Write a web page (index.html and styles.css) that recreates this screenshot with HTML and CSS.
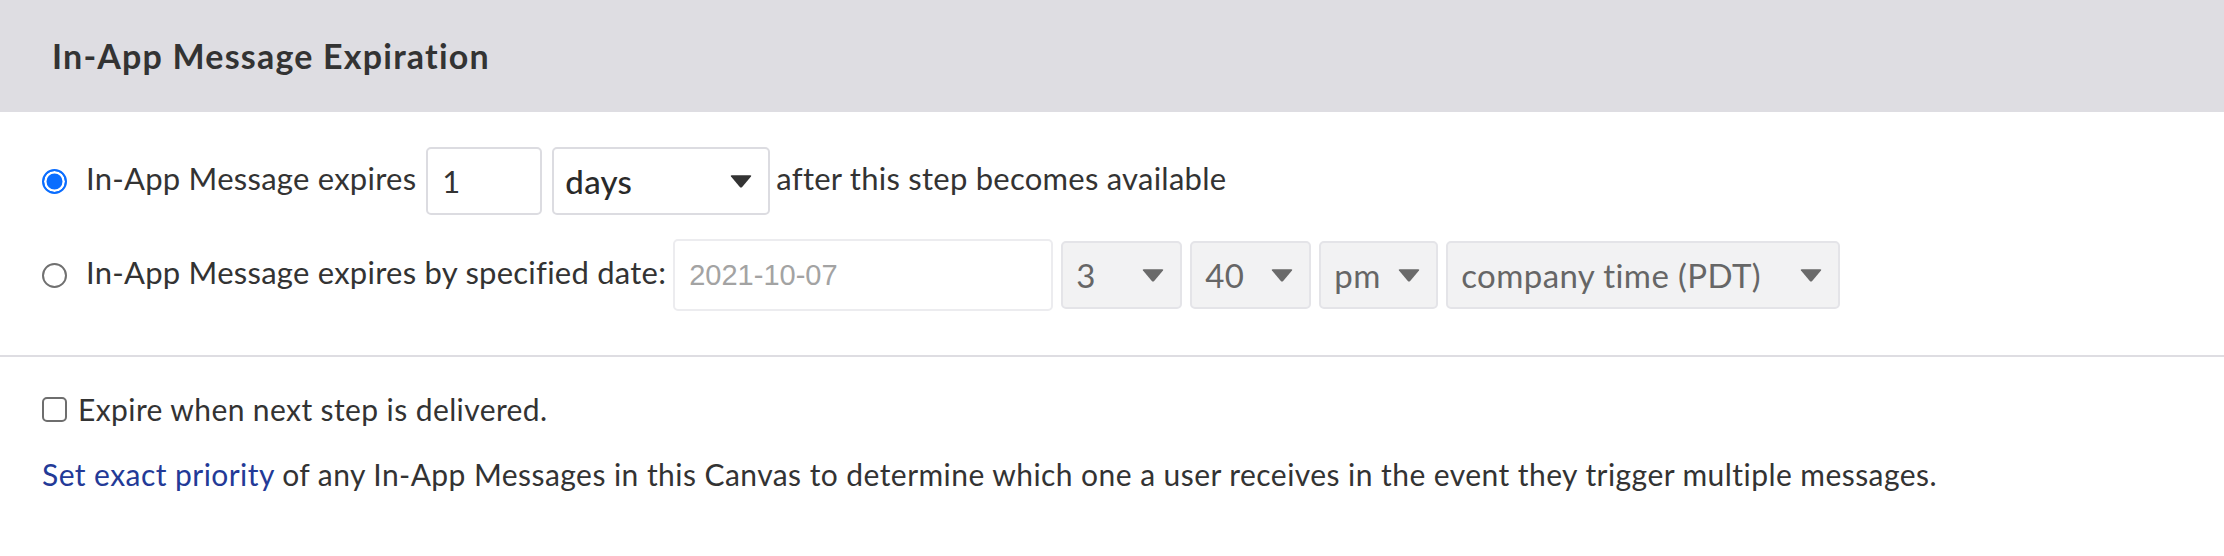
FILE: index.html
```html
<!DOCTYPE html>
<html lang="en">
<head>
<meta charset="utf-8">
<title>In-App Message Expiration</title>
<link rel="stylesheet" href="styles.css">
</head>
<body>
<div class="panel">
  <header class="panel-header">
    <h2 class="panel-title">In-App Message Expiration</h2>
  </header>

  <section class="options">
    <div class="option-row">
      <input class="radio" type="radio" name="expiry" checked>
      <span class="label">In-App Message expires</span>
      <input class="text-input num-input" type="text" value="1">
      <div class="select select-days">
        <span class="select-value">days</span>
        <svg class="caret" viewBox="0 0 22 13" aria-hidden="true"><path d="M1 1.5 Q0.2 0.3 1.6 0.3 H20.4 Q21.8 0.3 21 1.5 L12.2 12 Q11 13.2 9.8 12 Z"/></svg>
      </div>
      <span class="label label-after">after this step becomes available</span>
    </div>

    <div class="option-row">
      <input class="radio" type="radio" name="expiry">
      <span class="label">In-App Message expires by specified date:</span>
      <input class="text-input date-input" type="text" placeholder="2021-10-07" disabled>
      <div class="select select-disabled select-hour">
        <span class="select-value">3</span>
        <svg class="caret" viewBox="0 0 22 13" aria-hidden="true"><path d="M1 1.5 Q0.2 0.3 1.6 0.3 H20.4 Q21.8 0.3 21 1.5 L12.2 12 Q11 13.2 9.8 12 Z"/></svg>
      </div>
      <div class="select select-disabled select-min">
        <span class="select-value">40</span>
        <svg class="caret" viewBox="0 0 22 13" aria-hidden="true"><path d="M1 1.5 Q0.2 0.3 1.6 0.3 H20.4 Q21.8 0.3 21 1.5 L12.2 12 Q11 13.2 9.8 12 Z"/></svg>
      </div>
      <div class="select select-disabled select-ampm">
        <span class="select-value">pm</span>
        <svg class="caret" viewBox="0 0 22 13" aria-hidden="true"><path d="M1 1.5 Q0.2 0.3 1.6 0.3 H20.4 Q21.8 0.3 21 1.5 L12.2 12 Q11 13.2 9.8 12 Z"/></svg>
      </div>
      <div class="select select-disabled select-zone">
        <span class="select-value">company time (PDT)</span>
        <svg class="caret" viewBox="0 0 22 13" aria-hidden="true"><path d="M1 1.5 Q0.2 0.3 1.6 0.3 H20.4 Q21.8 0.3 21 1.5 L12.2 12 Q11 13.2 9.8 12 Z"/></svg>
      </div>
    </div>
  </section>

  <hr class="divider">

  <section class="extra">
    <label class="check-row">
      <input class="checkbox" type="checkbox">
      <span class="check-label">Expire when next step is delivered.</span>
    </label>
    <p class="note"><a class="note-link" href="#">Set exact priority</a> of any In-App Messages in this Canvas to determine which one a user receives in the event they trigger multiple messages.</p>
  </section>
</div>
</body>
</html>
```

FILE: styles.css
```css
html, body {
  margin: 0;
  padding: 0;
  background: #ffffff;
}

body {
  font-family: Lato, "Noto Sans", "DejaVu Sans", sans-serif;
  color: #333333;
}

.panel {
  width: 100%;
}

.panel-header {
  height: 112px;
  background: #dedde2;
  display: flex;
  align-items: center;
  padding-left: 52px;
  box-sizing: border-box;
}

.panel-title {
  margin: 0;
  font-size: 34px;
  font-weight: 700;
  letter-spacing: 1.2px;
  color: #333333;
  line-height: 1;
}

.options {
  padding: 35px 0 44px 42px;
  display: flex;
  flex-direction: column;
  gap: 24px;
}

.option-row {
  display: flex;
  align-items: center;
  min-height: 68px;
  gap: 8px;
  font-size: 31px;
  letter-spacing: 0.25px;
}

.radio {
  appearance: none;
  -webkit-appearance: none;
  margin: 0 11px 0 0;
  width: 25px;
  height: 25px;
  border-radius: 50%;
  border: 2px solid #707070;
  background: #ffffff;
  box-sizing: border-box;
  flex: none;
}

.radio:checked {
  border: 2.5px solid #0a6dff;
  background: #0a6dff;
  box-shadow: inset 0 0 0 2.5px #ffffff;
}

.label {
  padding-bottom: 6px;
  line-height: 36px;
  white-space: nowrap;
}

.label-after {
  margin-left: -2px;
}

.text-input {
  font-family: Lato, "Noto Sans", sans-serif;
  font-size: 31px;
  color: #333333;
  height: 68px;
  box-sizing: border-box;
  border: 2px solid #dcdce1;
  border-radius: 5px;
  background: #ffffff;
  padding: 0 14px;
  margin: 0;
  outline: none;
}

.num-input {
  width: 116px;
  margin: 0 2px;
}

.date-input {
  width: 380px;
  height: 72px;
  margin-left: -1px;
  border-color: #ececef;
  font-family: "Liberation Sans", Arial, sans-serif;
  font-size: 29px;
  letter-spacing: 0;
}

.date-input::placeholder {
  color: #a3a3a3;
}

.select {
  height: 68px;
  box-sizing: border-box;
  border: 2px solid #dcdce1;
  border-radius: 5px;
  background: #ffffff;
  display: flex;
  align-items: center;
  justify-content: space-between;
  padding: 0 16px 0 11px;
  flex: none;
}

.select-value {
  white-space: nowrap;
  line-height: 36px;
}

.caret {
  width: 22px;
  height: 13px;
  fill: #333333;
  flex: none;
}

.select-days {
  width: 218px;
}

.select-days .select-value {
  font-size: 33px;
  font-weight: 500;
  color: #2a2a2a;
}

.select-disabled {
  background: #f2f2f3;
  border-color: #e4e4e8;
  color: #666666;
  padding-left: 13px;
}

.select-disabled .select-value {
  font-size: 33px;
  letter-spacing: 0.4px;
}

.select-disabled .caret {
  fill: #6a6a6a;
}

.select-hour,
.select-min {
  width: 121px;
}

.select-ampm {
  width: 119px;
}

.select-zone {
  width: 394px;
}

.divider {
  margin: 0;
  border: 0;
  height: 2px;
  background: #dedde2;
}

.extra {
  padding: 34px 0 0 42px;
}

.check-row {
  display: flex;
  align-items: center;
  height: 36px;
  font-size: 30px;
  letter-spacing: 0.4px;
}

.checkbox {
  appearance: none;
  -webkit-appearance: none;
  margin: 0 11px 0 0;
  width: 25px;
  height: 25px;
  border: 2px solid #6e6e6e;
  border-radius: 5px;
  background: #ffffff;
  box-sizing: border-box;
  flex: none;
}

.note {
  margin: 29px 0 0 0;
  font-size: 30px;
  letter-spacing: 0.44px;
  line-height: 36px;
  white-space: nowrap;
}

.note-link {
  color: #233a97;
  text-decoration: none;
}
```
